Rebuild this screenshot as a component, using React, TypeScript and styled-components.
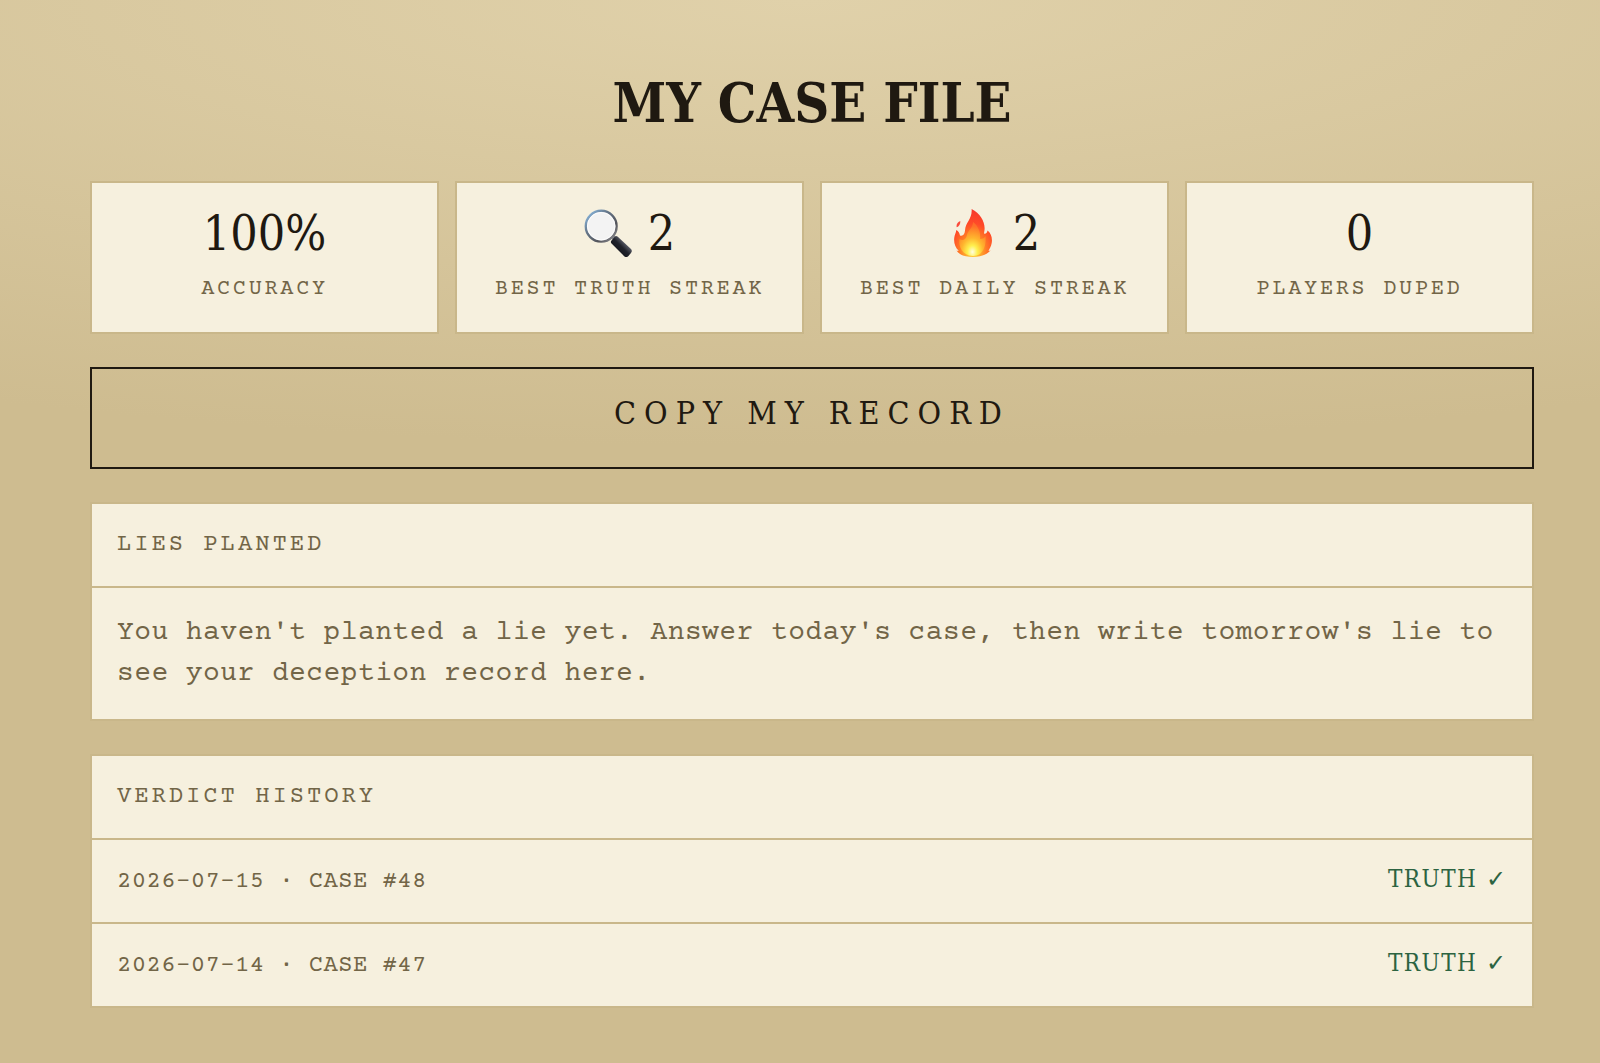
import React from "react";
import styled, { createGlobalStyle } from "styled-components";

const display = `"Special Elite", "DejaVu Serif Condensed", "DejaVu Serif", serif`;
const typed = `"Courier Prime", "Liberation Mono", monospace`;
const ink = "#1f1911";
const faded = "#726547";
const paper = "#f6f0de";
const edge = "#c9b78a";

const GlobalStyle = createGlobalStyle`
  * { box-sizing: border-box; }
  body { margin: 0; background: #cebc90; }
  h1, h2, p, ul, dl, dd { margin: 0; padding: 0; font-weight: 400; }
`;

const Page = styled.main`
  min-height: 100vh;
  padding: 70px 66px 54px 90px;
  display: flex;
  flex-direction: column;
  gap: 33px;
  background: radial-gradient(ellipse 115% 42% at 50% 0, #e0d1aa, #cebc90);
  color: ${ink};
`;

const Title = styled.h1`
  && { font-weight: 700; }
  padding-bottom: 12px;
  font-family: ${display};
  font-size: 54px;
  line-height: 66px;
  text-align: center;
`;

const Stats = styled.dl`
  display: grid;
  grid-template-columns: repeat(4, 1fr);
  gap: 16px;
`;

const Card = styled.div`
  display: flex;
  flex-direction: column-reverse;
  justify-content: flex-end;
  align-items: center;
  padding: 20px 16px 28px;
  background: ${paper};
  border: 2px solid ${edge};
`;

const Value = styled.dd`
  display: flex;
  align-items: center;
  gap: 16px;
  font-family: ${display};
  font-size: 48px;
  line-height: 60px;
`;

const Label = styled.dt`
  padding-top: 13px;
  font-family: ${typed};
  font-size: 22px;
  line-height: 28px;
  letter-spacing: 0.12em;
  text-transform: uppercase;
  color: ${faded};
`;

const Icon = styled.svg`
  width: 48px;
  height: 48px;
`;

const CopyButton = styled.button`
  width: 100%;
  padding: 24px 32px 34px;
  background: transparent;
  border: 2px solid ${ink};
  color: ${ink};
  font-family: ${display};
  font-size: 32px;
  line-height: 40px;
  letter-spacing: 0.25em;
  text-transform: uppercase;
  cursor: pointer;
`;

const Panel = styled.section`
  background: ${paper};
  border: 2px solid ${edge};
`;

const PanelTitle = styled.h2`
  && { padding: 27px 25px; }
  font-family: ${typed};
  font-size: 24px;
  line-height: 28px;
  letter-spacing: 0.12em;
  text-transform: uppercase;
  color: ${faded};
`;

const Note = styled.p`
  && { padding: 25px 25px 24px; }
  border-top: 2px solid ${edge};
  font-family: ${typed};
  font-size: 28px;
  line-height: 41px;
  letter-spacing: 0.015em;
  color: ${faded};
`;

const History = styled.ul`
  list-style: none;
`;

const Entry = styled.li`
  display: flex;
  justify-content: space-between;
  align-items: baseline;
  padding: 25px 25px 26px;
  border-top: 2px solid ${edge};
  line-height: 28px;
`;

const CaseRef = styled.span`
  font-family: ${typed};
  font-size: 24px;
  letter-spacing: 0.015em;
  color: ${faded};
`;

const Verdict = styled.span`
  font-family: ${display};
  font-size: 24px;
  letter-spacing: 0.06em;
  color: #2c6341;
`;

const Magnifier = () => (
  <Icon viewBox="0 0 48 48" aria-hidden="true">
    <defs>
      <linearGradient id="rim" x1="0" y1="0" x2="1" y2="1">
        <stop offset="0" stopColor="#8fc3ef" />
        <stop offset="0.35" stopColor="#66788c" />
        <stop offset="0.7" stopColor="#54555b" />
        <stop offset="1" stopColor="#9a9ba0" />
      </linearGradient>
      <linearGradient id="handle" x1="0" y1="1" x2="1" y2="0">
        <stop offset="0" stopColor="#08090c" />
        <stop offset="0.5" stopColor="#20222b" />
        <stop offset="0.7" stopColor="#626570" />
        <stop offset="1" stopColor="#14151b" />
      </linearGradient>
    </defs>
    <path d="M28 27l5 5" stroke="#85868b" strokeWidth="4" />
    <path d="M33.500 27.500l13.500 12.500q1.800 2-.2 4.200l-2.600 3q-2 1.800-4 0L27.300 34.200q-1-1.200.2-2.700l3.500-4q1-1.200 2.500 0z" fill="url(#handle)" />
    <circle cx="17.2" cy="17.2" r="15.4" fill="#f3f3f3" stroke="url(#rim)" strokeWidth="2.4" />
    <circle cx="17.2" cy="17.2" r="13.8" fill="none" stroke="#ffffff" strokeWidth="0.8" />
  </Icon>
);

const Flame = () => (
  <Icon viewBox="0 0 48 48" aria-hidden="true">
    <defs>
      <radialGradient id="fire" cx="0.5" cy="0.87" r="0.85">
        <stop offset="0" stopColor="#fff04a" />
        <stop offset="0.2" stopColor="#ffb52e" />
        <stop offset="0.42" stopColor="#ff7a26" />
        <stop offset="0.68" stopColor="#ff4a28" />
        <stop offset="1" stopColor="#f7382c" />
      </radialGradient>
      <radialGradient id="core" cx="0.5" cy="0.88" r="0.75">
        <stop offset="0" stopColor="#fffde0" />
        <stop offset="0.25" stopColor="#fff04f" />
        <stop offset="0.55" stopColor="#ffb52e" />
        <stop offset="1" stopColor="#ff8a2b" stopOpacity="0.5" />
      </radialGradient>
    </defs>
    <path d="M22.600 0C31 4 35.500 12 35.600 19c.1 3-.8 4.500-.4 5.700 2 .3 3-1.200 3.300-3.200C42 24 43.600 29 42.700 34c-.6 3.500-2.200 5.500-3.200 8 1-.1 1.700-.4 2.400-1C38 46 31 48 24 48S11 46.500 7.500 41.500c.9.4 1.500.5 2.200.3C6 38 4.600 33.500 5.300 28.500c.4-3 1.700-4.500 2-7.500C9.500 22 10.500 24 11 26.500c3 1 4.800-1.500 5-5C16.400 13 23.500 10 22.600 0z" fill="url(#fire)" />
    <path d="M24 13c5 4 8 10 7 17 3 0 4.500-1 5.500-3 1 9-2 20-12.500 20S9 37 10.500 30c3 2 6.500 1 7.500-4 1-5 6-7 6-13z" fill="url(#core)" />
    <path d="M11.300 12c.2 3-1.300 5.500-3.600 6.300C7 15.500 8.700 13 11.300 12z" fill="#fa4a3a" />
  </Icon>
);

const stats = [
  { label: "Accuracy", value: "100%" },
  { label: "Best truth streak", value: "2", icon: <Magnifier /> },
  { label: "Best daily streak", value: "2", icon: <Flame /> },
  { label: "Players duped", value: "0" },
];

const verdicts = [
  { date: "2026-07-15", number: 48 },
  { date: "2026-07-14", number: 47 },
];

export default function App() {
  return (
    <>
      <GlobalStyle />
      <Page>
        <Title>MY CASE FILE</Title>
        <Stats>
          {stats.map((stat) => (
            <Card key={stat.label}>
              <Label>{stat.label}</Label>
              <Value>
                {stat.icon}
                {stat.value}
              </Value>
            </Card>
          ))}
        </Stats>
        <CopyButton type="button">Copy my record</CopyButton>
        <Panel>
          <PanelTitle>Lies planted</PanelTitle>
          <Note>
            You haven't planted a lie yet. Answer today's case, then write
            tomorrow's lie to see your deception record here.
          </Note>
        </Panel>
        <Panel>
          <PanelTitle>Verdict history</PanelTitle>
          <History>
            {verdicts.map((entry) => (
              <Entry key={entry.number}>
                <CaseRef>{`${entry.date} · CASE #${entry.number}`}</CaseRef>
                <Verdict>TRUTH ✓</Verdict>
              </Entry>
            ))}
          </History>
        </Panel>
      </Page>
    </>
  );
}
